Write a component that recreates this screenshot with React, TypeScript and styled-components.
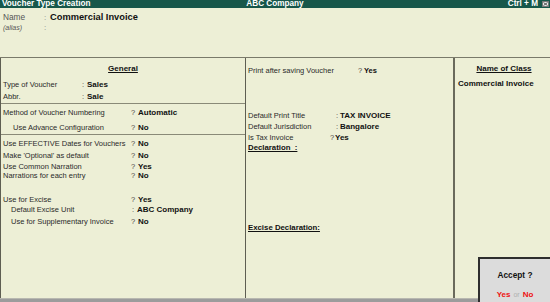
import React from "react";
import styled, { createGlobalStyle } from "styled-components";

const Global = createGlobalStyle`
  html, body { margin: 0; padding: 0; background: #edefd6; }
  body { font-family: "Liberation Sans", Arial, sans-serif; }
`;

const Screen = styled.div`
  position: relative;
  width: 550px;
  height: 302px;
  display: flex;
  flex-direction: column;
  background: #edefd6;
  color: #1a1a1a;
  overflow: hidden;
`;

const TitleBar = styled.div`
  height: 8px;
  background: #17574a;
  color: #ffffff;
  display: grid;
  grid-template-columns: 1fr auto 1fr;
  align-items: center;
  font: bold 8.2px/8px "Liberation Sans", Arial, sans-serif;
`;

const TitleLeft = styled.div`
  padding-left: 2px;
  white-space: nowrap;
`;

const TitleCenter = styled.div`
  white-space: nowrap;
`;

const TitleRight = styled.div`
  display: flex;
  justify-content: flex-end;
  align-items: center;
  gap: 4px;
  padding-right: 1px;
  white-space: nowrap;
`;

const CloseBox = styled.div`
  width: 7px;
  height: 6px;
  background: #e8e8e8;
  border: 1px solid #777;
  box-sizing: border-box;
  display: flex;
  align-items: center;
  justify-content: center;
`;

const TopArea = styled.div`
  height: 50px;
  padding: 4px 0 0 3px;
  border-bottom: 1px solid #7a7a6a;
  box-sizing: border-box;
`;

const NameRow = styled.div`
  display: flex;
  align-items: center;
  height: 10px;
`;

const NameLabel = styled.span<{ $italic?: boolean }>`
  width: 41px;
  color: #555;
  font-size: ${(p) => (p.$italic ? "7px" : "8.3px")};
  font-style: ${(p) => (p.$italic ? "italic" : "normal")};
`;

const NameColon = styled.span`
  width: 6px;
  color: #888;
  font-size: 8px;
`;

const NameValue = styled.span`
  font-weight: bold;
  font-size: 9.3px;
  color: #111;
`;

const Columns = styled.div`
  flex: 1;
  display: flex;
`;

const LeftPanel = styled.div`
  width: 244px;
  border-left: 1px solid #5e5e52;
  border-right: 1px solid #5e5e52;
  display: flex;
  flex-direction: column;
`;

const MidPanel = styled.div`
  width: 209px;
  border-right: 2px solid #6a6a5c;
  padding-left: 2px;
  box-sizing: border-box;
`;

const RightPanel = styled.div`
  flex: 1;
  padding-left: 3px;
`;

const Section = styled.div<{ $pad: number; $h?: number; $last?: boolean }>`
  padding-top: ${(p) => p.$pad}px;
  height: ${(p) => (p.$h ? `${p.$h}px` : "auto")};
  box-sizing: border-box;
  flex: ${(p) => (p.$last ? 1 : "none")};
  border-bottom: ${(p) => (p.$last ? "none" : "1px solid #8a8a78")};
`;

const Heading = styled.div<{ $h: number; $mt?: number }>`
  height: ${(p) => p.$h}px;
  line-height: ${(p) => p.$h}px;
  margin-top: ${(p) => p.$mt ?? 0}px;
  text-align: center;
  font-weight: bold;
  font-size: 8px;
  text-decoration: underline;
  color: #111;
`;

const Row = styled.div<{ $h: number; $mt?: number; $indent?: number }>`
  display: flex;
  align-items: center;
  height: ${(p) => p.$h}px;
  margin-top: ${(p) => p.$mt ?? 0}px;
  padding-left: ${(p) => p.$indent ?? 2}px;
  font-size: 7.5px;
  white-space: nowrap;
`;

const Label = styled.span<{ $w: number }>`
  width: ${(p) => p.$w}px;
  color: #2a2a2a;
  flex: none;
`;

const Mark = styled.span<{ $w?: number }>`
  width: ${(p) => p.$w ?? 6}px;
  color: #444;
  flex: none;
`;

const Value = styled.span<{ $size?: number }>`
  font-weight: bold;
  font-size: ${(p) => p.$size ?? 8}px;
  color: #111;
`;

const ClassName = styled.div`
  margin-top: 3px;
  line-height: 12px;
  font-weight: bold;
  font-size: 8px;
  color: #111;
  white-space: nowrap;
`;

const BoldUnder = styled.div<{ $h: number; $mt?: number }>`
  height: ${(p) => p.$h}px;
  line-height: ${(p) => p.$h}px;
  margin-top: ${(p) => p.$mt ?? 0}px;
  font-weight: bold;
  font-size: 7.8px;
  text-decoration: underline;
  color: #111;
  white-space: nowrap;
`;

const BottomStrip = styled.div`
  height: 4px;
  background: #9c9c9c;
  border-top: 1px solid #b8b8b0;
  box-sizing: border-box;
`;

const AcceptBox = styled.div`
  position: absolute;
  left: 478px;
  top: 257px;
  width: 72px;
  height: 45px;
  box-sizing: border-box;
  background: #dcdcdc;
  border: 2px solid #2e2e2e;
  border-right: none;
  border-bottom: none;
  display: flex;
  flex-direction: column;
  align-items: center;
`;

const AcceptTitle = styled.div`
  margin-top: 11px;
  font-weight: bold;
  font-size: 8.3px;
  color: #111;
`;

const AcceptChoices = styled.div`
  margin-top: 10px;
  font-size: 8px;
  font-weight: bold;
  color: #ee1111;
  display: flex;
  align-items: baseline;
  gap: 3px;
`;

const Or = styled.span`
  color: #b0b0b0;
  font-weight: normal;
  font-size: 7px;
`;

type RowSpec = { label: string; mark: string; value: string; w: number; h: number; mt?: number; indent?: number };

const LeftRow = ({ label, mark, value, w, h, mt, indent }: RowSpec) => (
  <Row $h={h} $mt={mt} $indent={indent}>
    <Label $w={w}>{label}</Label>
    <Mark $w={mark === ":" ? 5 : 7}>{mark}</Mark>
    <Value>{value}</Value>
  </Row>
);

export default function App() {
  return (
    <Screen>
      <Global />
      <TitleBar>
        <TitleLeft>Voucher Type Creation</TitleLeft>
        <TitleCenter>ABC Company</TitleCenter>
        <TitleRight>
          <span>Ctrl + M</span>
          <CloseBox>
            <svg width="5" height="4" viewBox="0 0 5 4">
              <path d="M0.5 0.5L4.5 3.5M4.5 0.5L0.5 3.5" stroke="#333" strokeWidth="0.8" />
            </svg>
          </CloseBox>
        </TitleRight>
      </TitleBar>

      <TopArea>
        <NameRow>
          <NameLabel>Name</NameLabel>
          <NameColon>:</NameColon>
          <NameValue>Commercial Invoice</NameValue>
        </NameRow>
        <NameRow>
          <NameLabel $italic>(alias)</NameLabel>
          <NameColon>:</NameColon>
        </NameRow>
      </TopArea>

      <Columns>
        <LeftPanel>
          <Section $pad={5} $h={46}>
            <Heading $h={12}>General</Heading>
            <LeftRow label="Type of Voucher" mark=":" value="Sales" w={79} h={12} mt={3} />
            <LeftRow label="Abbr." mark=":" value="Sale" w={79} h={12} />
          </Section>
          <Section $pad={2} $h={31}>
            <LeftRow label="Method of Voucher Numbering" mark="?" value="Automatic" w={128} h={12} />
            <LeftRow label="Use Advance Configuration" mark="?" value="No" w={118} h={12} mt={3} indent={12} />
          </Section>
          <Section $pad={2} $last>
            <LeftRow label="Use EFFECTIVE Dates for Vouchers" mark="?" value="No" w={128} h={12} />
            <LeftRow label="Make 'Optional' as default" mark="?" value="No" w={128} h={12} />
            <LeftRow label="Use Common Narration" mark="?" value="Yes" w={128} h={10} />
            <LeftRow label="Narrations for each entry" mark="?" value="No" w={128} h={8} />
            <LeftRow label="Use for Excise" mark="?" value="Yes" w={128} h={10} mt={15} />
            <LeftRow label="Default Excise Unit" mark=":" value="ABC Company" w={121} h={10} indent={10} />
            <LeftRow label="Use for Supplementary Invoice" mark="?" value="No" w={120} h={12} mt={1} indent={10} />
          </Section>
        </LeftPanel>

        <MidPanel>
          <Row $h={10} $mt={7} $indent={0}>
            <Label $w={110}>Print after saving Voucher</Label>
            <Mark>?</Mark>
            <Value $size={7.5}>Yes</Value>
          </Row>
          <Row $h={10} $mt={35} $indent={0}>
            <Label $w={88}>Default Print Title</Label>
            <Mark $w={4}>:</Mark>
            <Value>TAX INVOICE</Value>
          </Row>
          <Row $h={10} $mt={1} $indent={0}>
            <Label $w={88}>Default Jurisdiction</Label>
            <Mark $w={4}>:</Mark>
            <Value>Bangalore</Value>
          </Row>
          <Row $h={10} $mt={1} $indent={0}>
            <Label $w={82}>Is Tax Invoice</Label>
            <Mark $w={5}>?</Mark>
            <Value>Yes</Value>
          </Row>
          <BoldUnder $h={10} $mt={1}>Declaration&nbsp;&nbsp;:</BoldUnder>
          <BoldUnder $h={10} $mt={70}>Excise Declaration:</BoldUnder>
        </MidPanel>

        <RightPanel>
          <Heading $h={12} $mt={5}>Name of Class</Heading>
          <ClassName>Commercial Invoice</ClassName>
        </RightPanel>
      </Columns>

      <BottomStrip />

      <AcceptBox>
        <AcceptTitle>Accept ?</AcceptTitle>
        <AcceptChoices>
          <span>Yes</span>
          <Or>or</Or>
          <span>No</span>
        </AcceptChoices>
      </AcceptBox>
    </Screen>
  );
}
